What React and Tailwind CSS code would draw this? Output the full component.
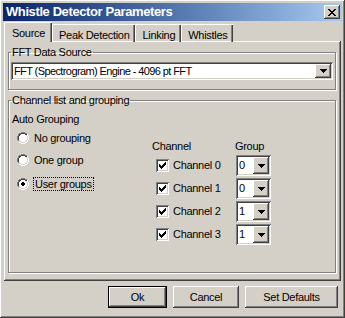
import React from "react";

// classic 3D bevels
const raised =
  "shadow-[inset_-1px_-1px_#404040,inset_1px_1px_#ffffff,inset_-2px_-2px_#808080,inset_2px_2px_#d4d0c8]";
const sunken =
  "shadow-[inset_1px_1px_#808080,inset_-1px_-1px_#ffffff,inset_2px_2px_#404040,inset_-2px_-2px_#d4d0c8]";

function Arrow() {
  return (
    <svg width="7" height="4" viewBox="0 0 7 4">
      <path d="M0 0h7v1H0zM1 1h5v1H1zM2 2h3v1H2zM3 3h1v1H3z" fill="#000" />
    </svg>
  );
}

function DropButton({ w = 16, h = 16 }) {
  return (
    <div
      className={`flex items-center justify-center bg-[#d4d0c8] ${raised}`}
      style={{ width: w, height: h }}
    >
      <Arrow />
    </div>
  );
}

function Radio({ checked }) {
  return (
    <svg width="12" height="12" viewBox="0 0 12 12" className="shrink-0">
      <path d="M4 0h4v1H4zM2 1h2v1H2zM8 1h2v1H8zM1 2h1v2H1zM0 4h1v4H0zM1 8h1v1H1z" fill="#808080" />
      <path d="M4 1h4v1H4zM2 2h2v1H2zM8 2h2v1H8zM1 4h1v4H1zM2 3h1v1H2z" fill="#404040" />
      <path d="M10 2h1v2h-1zM11 4h1v4h-1zM10 8h1v2h-1zM8 10h2v1H8zM4 11h4v1H4zM2 10h2v1H2z" fill="#ffffff" />
      <path d="M9 3h1v1H9zM10 4h1v4h-1zM9 8h1v1H9zM8 9h1v1H8zM4 10h4v1H4zM3 9h1v1H3zM2 8h1v1H2z" fill="#d4d0c8" />
      <path d="M4 2h4v1h1v1h1v4H9v1H8v1H4V9H3V8H2V4h1V3h1z" fill="#ffffff" />
      {checked && <path d="M5 4h2v1h1v2H7v1H5V7H4V5h1z" fill="#000" />}
    </svg>
  );
}

function Check() {
  return (
    <div className={`w-[13px] h-[13px] bg-white shrink-0 flex items-center justify-center ${sunken}`}>
      <svg width="7" height="7" viewBox="0 0 7 7">
        <path d="M6 0h1v3H6v1H5v1H4v1H3v1H2V6H1V5H0V2h1v1h1v1h1V3h1V2h1V1h1z" fill="#000" />
      </svg>
    </div>
  );
}

function Group({ value }) {
  return (
    <div className={`w-[35px] h-[21px] bg-white flex items-center p-[2px] ${sunken}`}>
      <span className="flex-1 pl-[1px] leading-none">{value}</span>
      <DropButton w={16} h={17} />
    </div>
  );
}

export default function App() {
  const tabs = ["Peak Detection", "Linking", "Whistles"];
  const rows = [
    ["Channel 0", "0"],
    ["Channel 1", "0"],
    ["Channel 2", "1"],
    ["Channel 3", "1"],
  ];

  return (
    <div
      className={`w-[345px] h-[318px] bg-[#d4d0c8] p-[3px] flex flex-col text-[11px] tracking-[-0.3px] text-black ${raised}`}
      style={{ fontFamily: '"Liberation Sans", Arial, sans-serif' }}
    >
      {/* Title bar */}
      <div className="h-[18px] flex items-center pl-[3px] pr-[2px] bg-gradient-to-r from-[#0a246a] to-[#a6caf0]">
        <span className="flex-1 text-white font-bold text-[13px] tracking-[-0.4px]">Whistle Detector Parameters</span>
        <div className={`w-[16px] h-[14px] bg-[#d4d0c8] flex items-center justify-center ${raised}`}>
          <svg width="8" height="7" viewBox="0 0 8 7">
            <path d="M0 0h2v1h1v1h2V1h1V0h2v1H7v1H6v1H5v1h1v1h1v1h1v1H6V6H5V5H3v1H2v1H0V6h1V5h1V4h1V3H2V2H1V1H0z" fill="#000" />
          </svg>
        </div>
      </div>

      {/* Tabs */}
      <div className="flex items-end mt-[1px] pl-[1px] h-[20px] relative z-10">
        <div className="h-[20px] px-[7px] pt-[2px] bg-[#d4d0c8] border-l border-t border-white rounded-tl-[2px] shadow-[inset_-1px_0_#404040,inset_-2px_0_#808080]">
          Source
        </div>
        {tabs.map((t) => (
          <div
            key={t}
            className="h-[18px] px-[6px] pt-[2px] border-l border-t border-white rounded-tl-[2px] shadow-[inset_-1px_0_#404040,inset_-2px_0_#808080,inset_0_-1px_#ffffff]"
          >
            {t}
          </div>
        ))}
      </div>

      {/* Panel */}
      <div className="mx-[1px] -mt-[1px] h-[240px] px-[4px] pt-[5px] flex flex-col gap-[4px] shadow-[inset_-1px_-1px_#404040,inset_1px_1px_#ffffff,inset_-2px_-2px_#808080]">
        <fieldset className="border border-[#808080] shadow-[inset_1px_1px_#ffffff,1px_1px_#ffffff] mr-[1px] h-[44px] px-[2px]">
          <legend className="px-[1px] leading-[13px]">FFT Data Source</legend>
          <div className={`mt-[3px] h-[18px] bg-white flex items-center p-[2px] ${sunken}`}>
            <span className="flex-1 pl-[1px] tracking-[-0.6px]">FFT (Spectrogram) Engine - 4096 pt FFT</span>
            <DropButton w={16} h={14} />
          </div>
        </fieldset>

        <fieldset className="border border-[#808080] shadow-[inset_1px_1px_#ffffff,1px_1px_#ffffff] mr-[1px] h-[179px] px-[2px]">
          <legend className="px-[1px] leading-[13px]">Channel list and grouping</legend>
          <div className="flex items-start">
            <div className="w-[141px] flex flex-col mt-[6px]">
              <div className="leading-[13px] pl-[1px]">Auto Grouping</div>
              <div className="h-[22px] flex items-center gap-[5px] pl-[6px] mt-[1px]">
                <Radio />
                <span>No grouping</span>
              </div>
              <div className="h-[22px] flex items-center gap-[5px] pl-[6px]">
                <Radio />
                <span>One group</span>
              </div>
              <div className="h-[22px] flex items-center gap-[5px] pl-[6px] mt-[2px]">
                <Radio checked />
                <span className="outline outline-1 outline-dotted outline-black px-[1px] leading-[12px]">User groups</span>
              </div>
            </div>
            <div className="flex flex-col mt-[33px]">
              <div className="flex leading-[13px]">
                <span className="w-[83px]">Channel</span>
                <span>Group</span>
              </div>
              {rows.map(([c, g]) => (
                <div key={c} className="flex items-center h-[21px] mt-[2px] first:mt-[1px]">
                  <div className="w-[84px] flex items-center gap-[4px] pl-[4px]">
                    <Check />
                    <span>{c}</span>
                  </div>
                  <Group value={g} />
                </div>
              ))}
            </div>
          </div>
        </fieldset>
      </div>

      {/* Buttons */}
      <div className="flex justify-end gap-[6px] mt-[5px] pr-[4px]">
        <button className="w-[59px] h-[22px] border border-black bg-[#d4d0c8] shadow-[inset_-1px_-1px_#404040,inset_1px_1px_#ffffff,inset_-2px_-2px_#808080]">
          Ok
        </button>
        <button className={`w-[66px] h-[22px] bg-[#d4d0c8] ${raised}`}>Cancel</button>
        <button className={`w-[93px] h-[22px] bg-[#d4d0c8] ${raised}`}>Set Defaults</button>
      </div>
    </div>
  );
}
